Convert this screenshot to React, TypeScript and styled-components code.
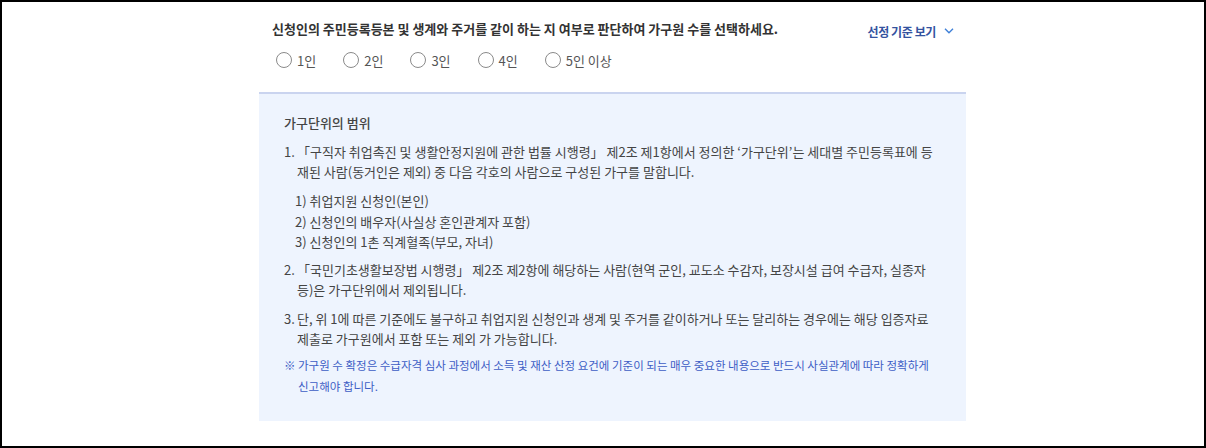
import { createGlobalStyle, styled } from "styled-components";

const GlobalStyle = createGlobalStyle`
  html, body {
    margin: 0;
    padding: 0;
    background: #fff;
  }
  body {
    font-family: "Noto Sans CJK KR", "Noto Sans", sans-serif;
  }
`;

const Frame = styled.div`
  box-sizing: border-box;
  width: 1206px;
  height: 448px;
  border: 2px solid #000;
  background: #fff;
  padding: 17px 0 0 257px;
`;

const Column = styled.div`
  width: 707px;
  display: flex;
  flex-direction: column;
`;

const Header = styled.div`
  display: flex;
  flex-direction: column;
  gap: 13px;
  padding: 0 13px;
  margin-bottom: 24px;
`;

const TitleRow = styled.div`
  display: flex;
  justify-content: space-between;
  align-items: center;
  height: 20px;
`;

const Title = styled.h2`
  margin: 0;
  font-size: 13px;
  line-height: 20px;
  font-weight: 700;
  color: #333;
`;

const ToggleButton = styled.button`
  display: flex;
  align-items: center;
  gap: 8px;
  margin: 4px -1px 0 0;
  padding: 0;
  border: none;
  background: transparent;
  font-family: inherit;
  font-size: 12px;
  font-weight: 700;
  letter-spacing: -0.4px;
  color: #34539f;
  cursor: pointer;
`;

const RadioGroup = styled.div`
  display: flex;
  gap: 27px;
  padding-left: 4px;
  height: 16px;
`;

const RadioItem = styled.label`
  display: flex;
  align-items: center;
  gap: 5px;
  font-size: 13px;
  color: #555;
  cursor: pointer;
`;

const RadioInput = styled.input`
  appearance: none;
  box-sizing: border-box;
  width: 16px;
  height: 16px;
  margin: 0;
  border: 1px solid #8a8a8a;
  border-radius: 50%;
  background: #fff;
`;

const Panel = styled.section`
  border-top: 2px solid #cad4ef;
  background: #eef4fe;
  padding: 19px 25px 24px;
  color: #444;
`;

const PanelHeading = styled.h3`
  margin: 0 0 9px;
  font-size: 13px;
  line-height: 20px;
  font-weight: 500;
  color: #444;
`;

const Item = styled.div<{ $gap?: number }>`
  display: flex;
  margin-top: ${(p) => p.$gap ?? 9}px;
  font-size: 13px;
  line-height: 20px;
  white-space: nowrap;
`;

const Marker = styled.span<{ $width: number }>`
  flex: 0 0 ${(p) => p.$width}px;
`;

const SubList = styled.div`
  margin: 9px 0 0 11px;
  font-size: 13px;
  line-height: 20.5px;
`;

const Note = styled(Item)`
  font-size: 11.5px;
  line-height: 21px;
  color: #3d5dc5;
`;

const items = [
  [
    "「구직자 취업촉진 및 생활안정지원에 관한 법률 시행령」 제2조 제1항에서 정의한 ‘가구단위’는 세대별 주민등록표에 등",
    "재된 사람(동거인은 제외) 중 다음 각호의 사람으로 구성된 가구를 말합니다.",
  ],
  [
    "「국민기초생활보장법 시행령」 제2조 제2항에 해당하는 사람(현역 군인, 교도소 수감자, 보장시설 급여 수급자, 실종자",
    "등)은 가구단위에서 제외됩니다.",
  ],
  [
    "단, 위 1에 따른 기준에도 불구하고 취업지원 신청인과 생계 및 주거를 같이하거나 또는 달리하는 경우에는 해당 입증자료",
    "제출로 가구원에서 포함 또는 제외 가 가능합니다.",
  ],
];

const members = ["1인", "2인", "3인", "4인", "5인 이상"];

const Lines = ({ lines }: { lines: string[] }) => (
  <span>
    {lines.map((line, i) => (
      <span key={i}>
        {i > 0 && <br />}
        {line}
      </span>
    ))}
  </span>
);

export default function App() {
  return (
    <>
      <GlobalStyle />
      <Frame>
        <Column>
          <Header>
            <TitleRow>
              <Title>
                신청인의 주민등록등본 및 생계와 주거를 같이 하는 지 여부로 판단하여 가구원 수를 선택하세요.
              </Title>
              <ToggleButton>
                선정 기준 보기
                <svg width="10" height="6" viewBox="0 0 10 6" fill="none">
                  <polyline
                    points="1,0.8 5,4.8 9,0.8"
                    stroke="#3f80d8"
                    strokeWidth="1.4"
                  />
                </svg>
              </ToggleButton>
            </TitleRow>
            <RadioGroup>
              {members.map((m) => (
                <RadioItem key={m}>
                  <RadioInput type="radio" name="members" />
                  {m}
                </RadioItem>
              ))}
            </RadioGroup>
          </Header>
          <Panel>
            <PanelHeading>가구단위의 범위</PanelHeading>
            <Item $gap={0}>
              <Marker $width={13}>1.</Marker>
              <Lines lines={items[0]} />
            </Item>
            <SubList>
              <div>1) 취업지원 신청인(본인)</div>
              <div>2) 신청인의 배우자(사실상 혼인관계자 포함)</div>
              <div>3) 신청인의 1촌 직계혈족(부모, 자녀)</div>
            </SubList>
            <Item $gap={7}>
              <Marker $width={13}>2.</Marker>
              <Lines lines={items[1]} />
            </Item>
            <Item>
              <Marker $width={13}>3.</Marker>
              <Lines lines={items[2]} />
            </Item>
            <Note $gap={6}>
              <Marker $width={14}>※</Marker>
              <Lines
                lines={[
                  "가구원 수 확정은 수급자격 심사 과정에서 소득 및 재산 산정 요건에 기준이 되는 매우 중요한 내용으로 반드시 사실관계에 따라 정확하게",
                  "신고해야 합니다.",
                ]}
              />
            </Note>
          </Panel>
        </Column>
      </Frame>
    </>
  );
}
